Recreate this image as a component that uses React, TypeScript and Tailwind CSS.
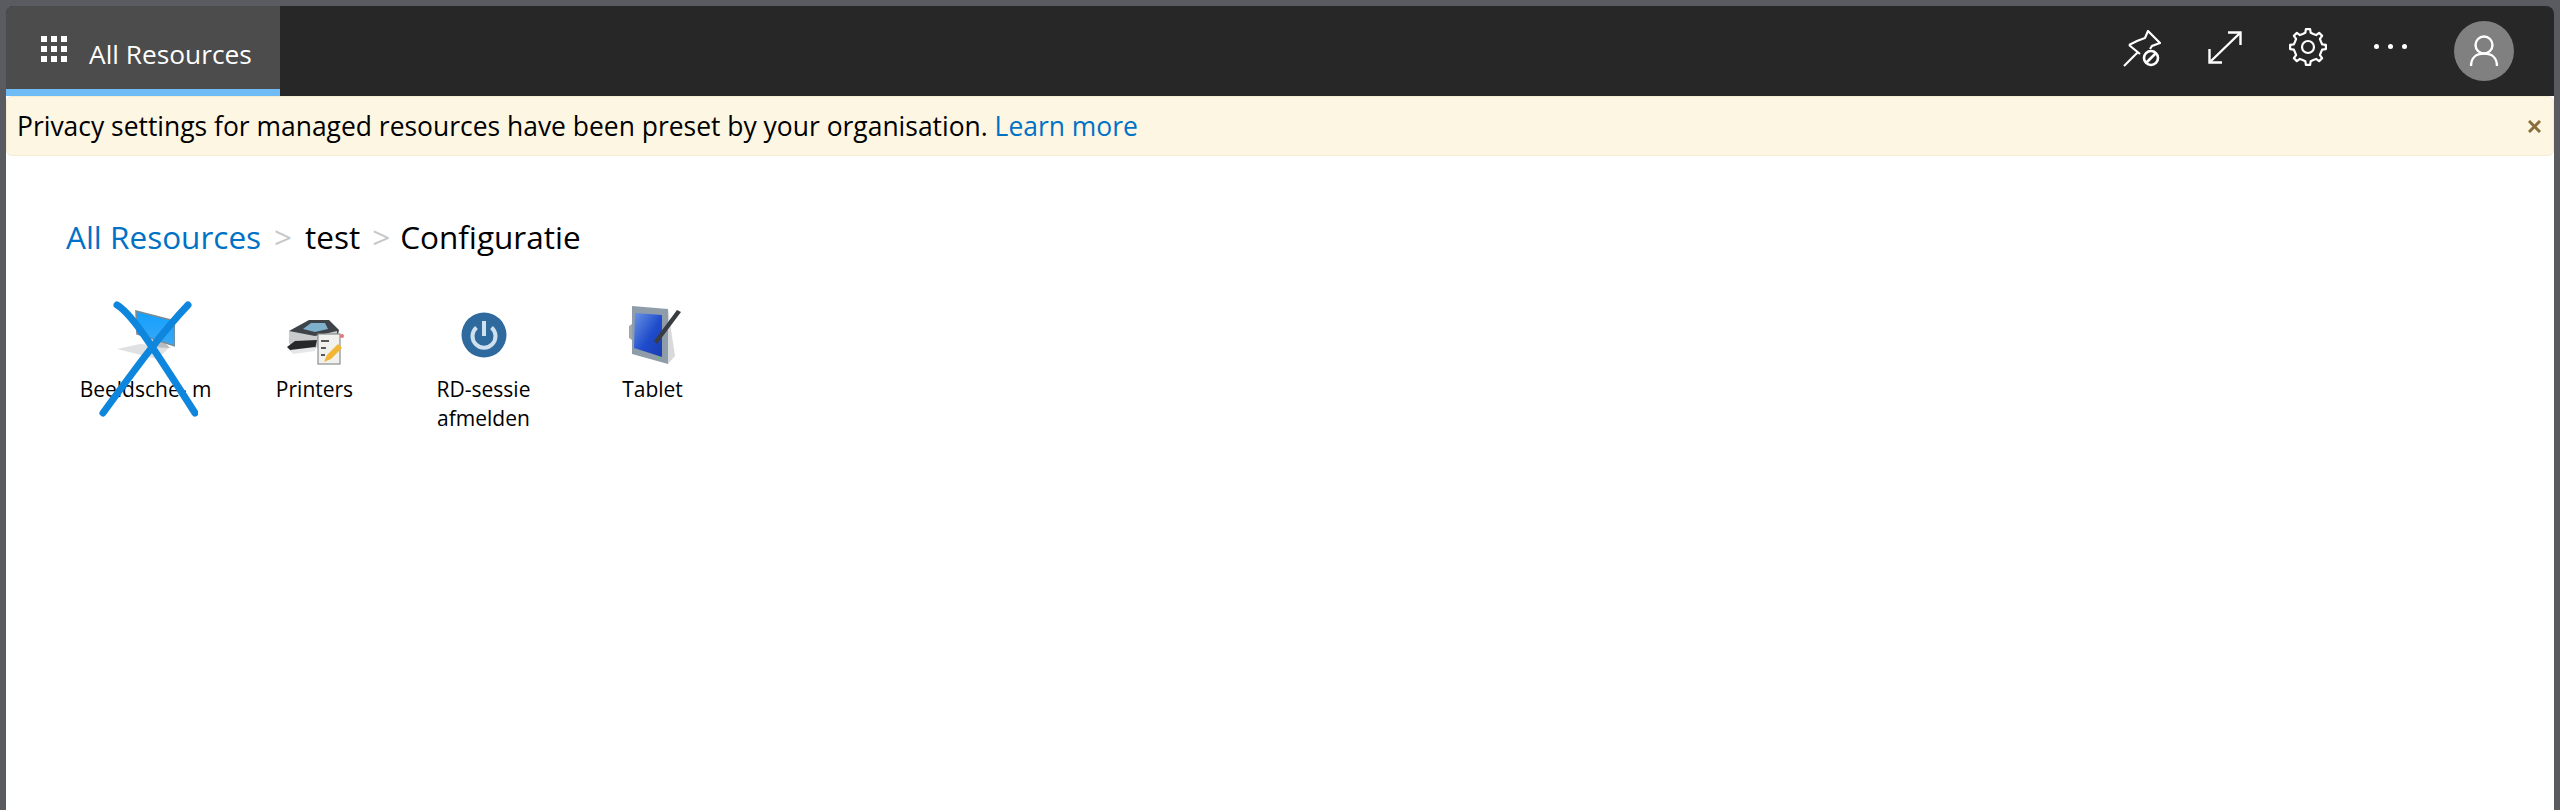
import React from 'react';

const uiFont = { fontFamily: '"Open Sans", "Noto Sans", sans-serif' };

function GridIcon() {
  return (
    <svg width="26" height="26" viewBox="0 0 26 26" fill="#fff">
      {[0, 10, 20].map((y) =>
        [0, 10, 20].map((x) => <rect key={`${x}-${y}`} x={x} y={y} width="6" height="6" />)
      )}
    </svg>
  );
}

function PinOffIcon() {
  return (
    <svg width="38" height="37" viewBox="0 0 38 37" fill="none" stroke="#fff" strokeWidth="2.2">
      <path d="M1 36 L15 22" />
      <path d="M6 15 L17 24" />
      <path d="M6 15 L14 11 L22 8 L25 1 L37 13 L29 16 L27 19" />
      <circle cx="28" cy="28" r="7" strokeWidth="2.6" />
      <path d="M23 33 L33 23" strokeWidth="2.6" />
    </svg>
  );
}

function ExpandIcon() {
  return (
    <svg width="34" height="33" viewBox="0 0 34 33" fill="none" stroke="#fff" strokeWidth="2.4">
      <path d="M2 31 L32 2" />
      <path d="M20 1.5 H32.5 V14" />
      <path d="M1.5 18 V31.5 H14" />
    </svg>
  );
}

function GearIcon() {
  const teeth = 8;
  const pts: string[] = [];
  for (let i = 0; i < teeth; i++) {
    const a = (i / teeth) * Math.PI * 2 - Math.PI / 2;
    const step = (Math.PI * 2) / teeth;
    [[-0.5, 14], [-0.24, 14.4], [-0.15, 18], [0.15, 18], [0.24, 14.4]].forEach(([o, r]) => {
      const t = a + o * step;
      pts.push(`${(19 + r * Math.cos(t)).toFixed(2)} ${(19 + r * Math.sin(t)).toFixed(2)}`);
    });
  }
  return (
    <svg width="38" height="38" viewBox="0 0 38 38" fill="none" stroke="#fff" strokeWidth="2.2" strokeLinejoin="round">
      <path d={`M${pts.join(' L')} Z`} />
      <circle cx="19" cy="19" r="6" />
    </svg>
  );
}

function UserIcon() {
  return (
    <svg width="30" height="32" viewBox="0 0 30 32" fill="none" stroke="#fff" strokeWidth="2.4">
      <circle cx="15" cy="10" r="8.5" />
      <path d="M2 31 C2 23 7 18.5 15 18.5 C23 18.5 28 23 28 31" />
    </svg>
  );
}

function MonitorIcon() {
  return (
    <svg width="58" height="50" viewBox="0 0 58 50">
      <defs>
        <linearGradient id="screenFill" x1="0" y1="0" x2="0" y2="1">
          <stop offset="0" stopColor="#12a0ff" />
          <stop offset="1" stopColor="#3aa8f5" />
        </linearGradient>
      </defs>
      <path d="M0 39 L23 34 L53 37 L40 49 Z" fill="#dfe1e3" />
      <path d="M36 30 L33 37 L53 38 L48 33 Z" fill="#b6bcc0" />
      <path d="M19 1 L58 11 L58 36 L20 24 Z" fill="url(#screenFill)" stroke="#7d8a92" strokeWidth="1.6" />
    </svg>
  );
}

function PrinterIcon() {
  return (
    <svg className="mt-[14px] ml-[3px]" width="58" height="46" viewBox="0 0 58 46">
      <path d="M2 12 L22 1 L42 1 L52 11 L50 20 L6 22 Z" fill="#3d4348" />
      <path d="M16 10 L24 4 L38 4 L41 10 L28 13 Z" fill="#7fb0cc" />
      <path d="M2 12 L2 24 L6 30 L32 28 L50 20 L50 12 L28 17 Z" fill="#c9cccd" />
      <path d="M0 28 L8 22 L30 21 L28 30 L6 34 Z" fill="#26282a" />
      <path d="M3 31 L28 28 L28 32 L6 35 Z" fill="#e6e7e8" />
      <rect x="31" y="15" width="22" height="30" fill="#f1f1ee" stroke="#8c8f90" strokeWidth="1.2" />
      <path d="M34 22 H42 M34 29 H39 M34 36 H38" stroke="#55595c" strokeWidth="2" />
      <path d="M37 43 L40 36 L51 25 L55 29 L44 40 Z" fill="#f2b632" />
      <circle cx="55" cy="17" r="2" fill="#e87478" />
    </svg>
  );
}

function PowerIcon() {
  return (
    <svg width="46" height="46" viewBox="0 0 46 46">
      <circle cx="23" cy="23" r="22.5" fill="#2f6a9e" />
      <path d="M15.5 15.5 A11.5 11.5 0 1 0 30.5 15.5" fill="none" stroke="#cfe0ee" strokeWidth="4" />
      <path d="M23 9 V24" stroke="#cfe0ee" strokeWidth="4" />
    </svg>
  );
}

function TabletIcon() {
  return (
    <svg className="ml-[5px]" width="52" height="59" viewBox="0 0 52 59">
      <defs>
        <linearGradient id="tabletFill" x1="0" y1="0" x2="1" y2="1">
          <stop offset="0" stopColor="#6a94e6" />
          <stop offset="0.55" stopColor="#1f4ccb" />
          <stop offset="1" stopColor="#1a3cb0" />
        </linearGradient>
      </defs>
      <path d="M39 3 L46 50 L39 58 Z" fill="#d8d9da" />
      <path d="M3 0 L39 3 L39 58 L3 48 Z" fill="#8f9daa" />
      <path d="M6 7 L33 9 L33 51 L5 42 Z" fill="url(#tabletFill)" />
      <path d="M0 20 L3 18 L3 34 L0 32 Z" fill="#a2a8ad" />
      <path d="M25 35 L48 4 L52 6 L28 38 Z" fill="#3a3d40" />
      <circle cx="30" cy="52" r="1" fill="#4cd137" />
    </svg>
  );
}

function ResourceItem({ icon, label }: { icon: React.ReactNode; label: React.ReactNode }) {
  return (
    <div className="w-[169px] flex flex-col items-center">
      <div className="h-[66px] flex items-center justify-center">{icon}</div>
      <div className="mt-[7px] text-[21px] leading-[29px] text-black text-center">{label}</div>
    </div>
  );
}

export default function App() {
  return (
    <div className="h-[810px] bg-[#5a5b60] pt-[6px] px-[6px] flex flex-col" style={uiFont}>
      <header className="h-[90px] shrink-0 bg-[#272727] rounded-t-[8px] flex items-stretch overflow-hidden">
        <div className="w-[274px] bg-[#4c4c4c] border-b-[7px] border-[#6fbbf5] flex items-start pl-[35px] pt-[30px] gap-[22px]">
          <GridIcon />
          <span className="text-[26.3px] leading-[34px] mt-[1px] text-white whitespace-nowrap">All Resources</span>
        </div>
        <div className="ml-auto flex items-start">
          <div className="mt-[24px] w-[83px] flex justify-center"><PinOffIcon /></div>
          <div className="mt-[25px] w-[83px] flex justify-center"><ExpandIcon /></div>
          <div className="mt-[22px] w-[83px] flex justify-center"><GearIcon /></div>
          <div className="mt-[38px] w-[83px] flex justify-center gap-[9px]">
            <span className="w-[5px] h-[5px] rounded-full bg-white" />
            <span className="w-[5px] h-[5px] rounded-full bg-white" />
            <span className="w-[5px] h-[5px] rounded-full bg-white" />
          </div>
          <div className="mt-[15px] ml-[22px] mr-[40px] w-[60px] h-[60px] rounded-full bg-[#808080] flex items-center justify-center">
            <UserIcon />
          </div>
        </div>
      </header>
      <main className="flex-1 bg-white flex flex-col">
        <div className="h-[60px] bg-[#fdf6e3] border border-[#f5ecd2] rounded-[6px] flex items-center pl-[10px] pr-[12px] text-[26.45px] text-black">
          <span className="pt-[2px]">
            Privacy settings for managed resources have been preset by your organisation.{' '}
            <a className="text-[#0072c6]">Learn more</a>
          </span>
          <svg className="ml-auto" width="13" height="13" viewBox="0 0 13 13" stroke="#8a6d3b" strokeWidth="3">
            <path d="M1 1 L12 12 M12 1 L1 12" />
          </svg>
        </div>
        <nav className="mt-[59px] ml-[60px] text-[31.5px] leading-[44px] flex items-center whitespace-nowrap">
          <a className="text-[#0072c6]">All Resources</a>
          <span className="mx-[13px] text-[#c8c8c8]">&gt;</span>
          <span className="text-black">test</span>
          <span className="ml-[12px] mr-[10px] text-[#c8c8c8]">&gt;</span>
          <span className="text-black">Configuratie</span>
        </nav>
        <div className="mt-[43px] ml-[55px] flex items-start">
          <div className="relative">
            <ResourceItem icon={<MonitorIcon />} label="Beeldsche- m" />
            <svg className="absolute left-[37px] -top-[2px]" width="100" height="118" viewBox="0 0 100 118" fill="none" stroke="#0f86de" strokeWidth="7" strokeLinecap="round">
              <path d="M19 5 C32 13 44 30 97 113" />
              <path d="M90 5 C66 30 40 65 5 113" />
            </svg>
          </div>
          <ResourceItem icon={<PrinterIcon />} label="Printers" />
          <ResourceItem icon={<PowerIcon />} label={<>RD-sessie<br />afmelden</>} />
          <ResourceItem icon={<TabletIcon />} label="Tablet" />
        </div>
      </main>
    </div>
  );
}
